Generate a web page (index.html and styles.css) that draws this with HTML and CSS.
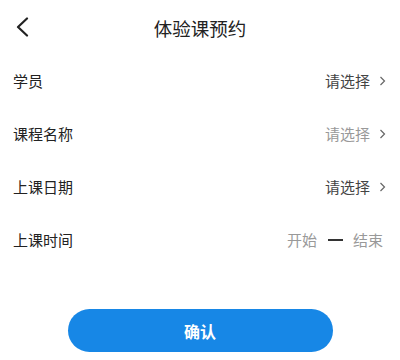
FILE: index.html
```html
<!DOCTYPE html>
<html lang="zh-CN">
<head>
<meta charset="utf-8">
<link rel="stylesheet" href="styles.css">
</head>
<body>
<div class="page">
  <header class="nav">
    <svg class="back" width="14" height="20" viewBox="0 0 14 20"><path d="M12 1.5 L3 10 L12 18.5" fill="none" stroke="#222" stroke-width="2.2" stroke-linecap="round" stroke-linejoin="round"/></svg>
    <h1 class="title">体验课预约</h1>
  </header>
  <ul class="form">
    <li class="row">
      <span class="label">学员</span>
      <span class="value dark">请选择<svg class="arrow" width="7" height="10" viewBox="0 0 7 10"><path d="M1.5 1 L5.5 5 L1.5 9" fill="none" stroke="#666" stroke-width="1.2"/></svg></span>
    </li>
    <li class="row">
      <span class="label">课程名称</span>
      <span class="value light">请选择<svg class="arrow" width="7" height="10" viewBox="0 0 7 10"><path d="M1.5 1 L5.5 5 L1.5 9" fill="none" stroke="#666" stroke-width="1.2"/></svg></span>
    </li>
    <li class="row">
      <span class="label">上课日期</span>
      <span class="value dark">请选择<svg class="arrow" width="7" height="10" viewBox="0 0 7 10"><path d="M1.5 1 L5.5 5 L1.5 9" fill="none" stroke="#666" stroke-width="1.2"/></svg></span>
    </li>
    <li class="row">
      <span class="label">上课时间</span>
      <span class="value range"><span>开始</span><span class="dash"></span><span>结束</span></span>
    </li>
  </ul>
  <button class="confirm">确认</button>
</div>
</body>
</html>
```
FILE: styles.css
```css
* { box-sizing: border-box; }
html, body {
  margin: 0;
  padding: 0;
  background: #fff;
}
body {
  font-family: "Noto Sans CJK SC", "Noto Sans", sans-serif;
  color: #222;
}
.page {
  width: 400px;
  height: 360px;
  overflow: hidden;
}
.nav {
  position: relative;
  height: 54px;
  display: flex;
  align-items: center;
  justify-content: center;
}
.back {
  position: absolute;
  left: 15px;
  top: 17px;
}
.title {
  margin: 0;
  font-size: 18.5px;
  font-weight: 400;
  color: #222;
  line-height: 1;
  padding-top: 2px;
}
.form {
  list-style: none;
  margin: 0;
  padding: 0;
}
.row {
  height: 53px;
  display: flex;
  align-items: center;
  justify-content: space-between;
  padding: 0 14px 0 13px;
}
.label {
  font-size: 15px;
  color: #222;
}
.value {
  font-size: 15px;
  display: flex;
  align-items: center;
}
.value.dark { color: #444; }
.value.light { color: #999; }
.arrow {
  margin-left: 9px;
}
.range {
  color: #999;
  padding-right: 3px;
}
.dash {
  display: inline-block;
  width: 15px;
  height: 2px;
  background: #333;
  margin: 0 10px 0 11px;
}
.confirm {
  display: block;
  margin: 43px auto 0;
  width: 265px;
  height: 43px;
  border: none;
  border-radius: 22px;
  background: #1787e6;
  color: #fff;
  font-family: "Noto Sans CJK SC", sans-serif;
  font-size: 16px;
  font-weight: 700;
  padding: 0;
}
```
